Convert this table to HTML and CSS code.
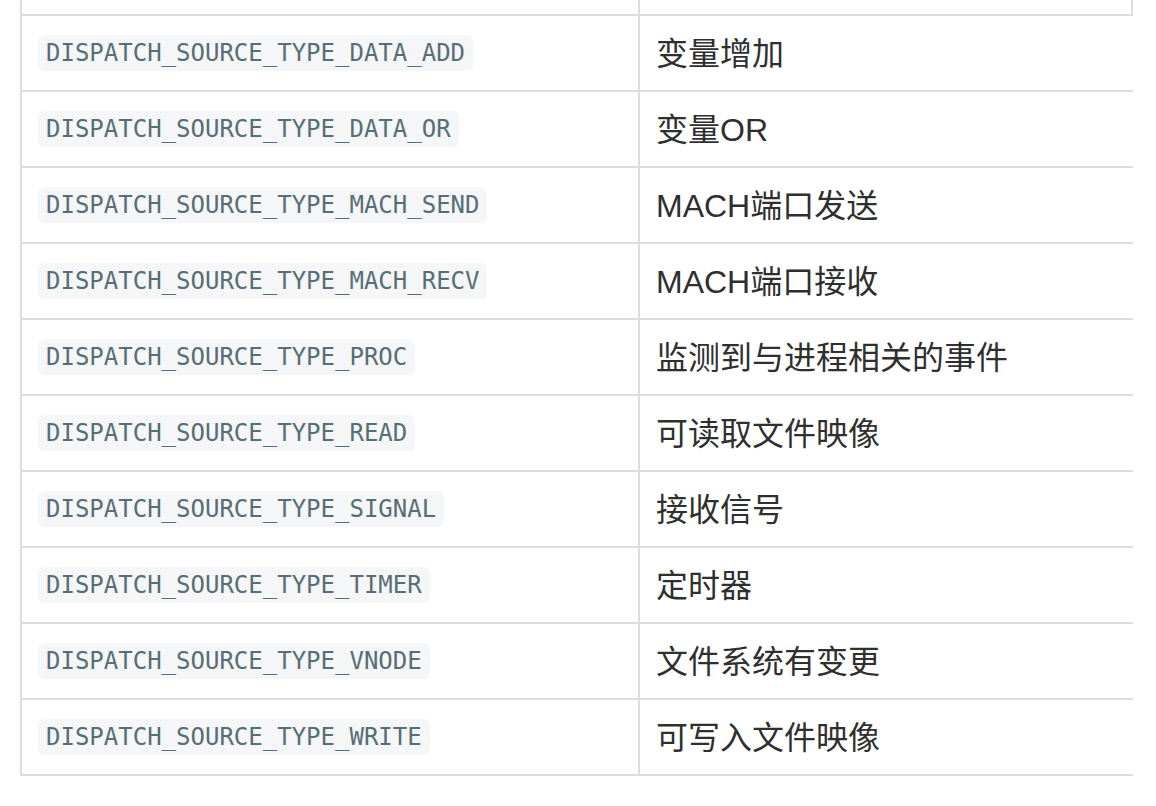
FILE: index.html
```html
<!DOCTYPE html>
<html lang="zh-CN">
<head>
<meta charset="utf-8">
<title>Dispatch Source Types</title>
<link rel="stylesheet" href="styles.css">
</head>
<body>
<div class="table">
  <div class="row row-top"><div class="cell c1"></div><div class="cell c2"></div></div>
  <div class="row"><div class="cell c1"><code>DISPATCH_SOURCE_TYPE_DATA_ADD</code></div><div class="cell c2">变量增加</div></div>
  <div class="row"><div class="cell c1"><code>DISPATCH_SOURCE_TYPE_DATA_OR</code></div><div class="cell c2">变量OR</div></div>
  <div class="row"><div class="cell c1"><code>DISPATCH_SOURCE_TYPE_MACH_SEND</code></div><div class="cell c2">MACH端口发送</div></div>
  <div class="row"><div class="cell c1"><code>DISPATCH_SOURCE_TYPE_MACH_RECV</code></div><div class="cell c2">MACH端口接收</div></div>
  <div class="row"><div class="cell c1"><code>DISPATCH_SOURCE_TYPE_PROC</code></div><div class="cell c2">监测到与进程相关的事件</div></div>
  <div class="row"><div class="cell c1"><code>DISPATCH_SOURCE_TYPE_READ</code></div><div class="cell c2">可读取文件映像</div></div>
  <div class="row"><div class="cell c1"><code>DISPATCH_SOURCE_TYPE_SIGNAL</code></div><div class="cell c2">接收信号</div></div>
  <div class="row"><div class="cell c1"><code>DISPATCH_SOURCE_TYPE_TIMER</code></div><div class="cell c2">定时器</div></div>
  <div class="row"><div class="cell c1"><code>DISPATCH_SOURCE_TYPE_VNODE</code></div><div class="cell c2">文件系统有变更</div></div>
  <div class="row"><div class="cell c1"><code>DISPATCH_SOURCE_TYPE_WRITE</code></div><div class="cell c2">可写入文件映像</div></div>
</div>
</body>
</html>
```
FILE: styles.css
```css
html, body {
  margin: 0;
  padding: 0;
  background: #ffffff;
}
body {
  font-family: "Liberation Sans", "Noto Sans CJK SC", sans-serif;
  color: #333333;
}
.table {
  margin-left: 20px;
  width: 1111px;
  border-left: 2px solid #dddddd;
}
.row {
  display: flex;
  height: 76px;
  box-sizing: border-box;
  border-bottom: 2px solid #dddddd;
}
.row-top {
  height: 16px;
  border-right: 2px solid #dddddd;
}
.cell {
  display: flex;
  align-items: center;
  box-sizing: border-box;
}
.c1 {
  width: 618px;
  padding-left: 16px;
  border-right: 2px solid #dddddd;
}
.c2 {
  flex: 1;
  padding-left: 16px;
  padding-bottom: 4px;
  font-size: 32px;
  color: #2f2f2f;
}
code {
  font-family: "DejaVu Sans Mono", "Liberation Mono", monospace;
  font-size: 24px;
  color: #586e75;
  background: #f5f6f7;
  padding: 4px 8px;
  border-radius: 6px;
}
```
